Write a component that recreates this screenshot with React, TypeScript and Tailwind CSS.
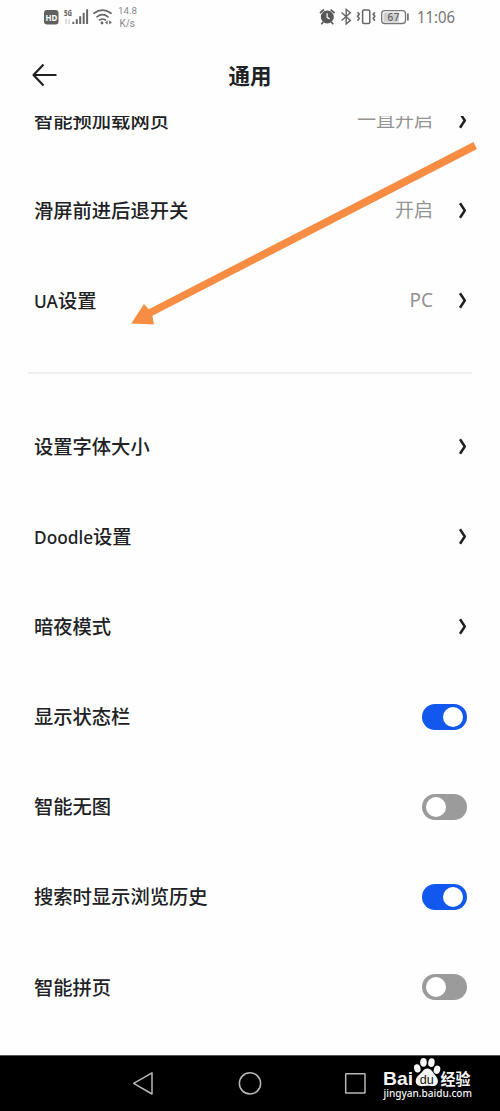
import React from "react";

const chevronPath = "M2 1.2 L6.8 8.5 L2 15.8";

function Chevron() {
  return (
    <svg className="ml-[25px] mr-[33px] h-[17px] w-[9px]" viewBox="0 0 9 17" fill="none">
      <path d={chevronPath} stroke="#202124" strokeWidth="2.5" strokeLinejoin="round" />
    </svg>
  );
}

function Toggle({ on }: { on: boolean }) {
  return (
    <span
      className={
        on
          ? "mr-[33px] flex h-[26px] w-[45px] items-center justify-end rounded-full bg-[#1257ee] pr-[4px]"
          : "mr-[33px] flex h-[26px] w-[45px] items-center justify-start rounded-full bg-[#9b9b9b] pl-[4px]"
      }
    >
      <span className="size-[20px] rounded-full bg-white" />
    </span>
  );
}

type RowProps = { latin?: string; label: string; value?: string; toggle?: boolean };

function Row({ latin, label, value, toggle }: RowProps) {
  return (
    <div className="flex h-[90.2px] shrink-0 items-center pl-[34px] text-[#202124]">
      <div className="flex flex-1 items-baseline whitespace-nowrap leading-none">
        {latin && <span className="text-[17.3px] font-medium">{latin}</span>}
        <span className="text-[19.3px] font-medium">{label}</span>
      </div>
      {value && <span className="text-[19px] leading-none text-[#939393]">{value}</span>}
      {toggle === undefined ? <Chevron /> : <Toggle on={toggle} />}
    </div>
  );
}

function StatusBar() {
  return (
    <div className="flex h-[36px] shrink-0 justify-between text-[#666666]">
      <svg className="h-[36px] w-[150px]" viewBox="0 0 150 36" fill="none">
        <rect x="44" y="10" width="14.5" height="14.5" rx="3" fill="#606060" />
        <text x="45.4" y="20.8" fontSize="9" fontWeight="700" fill="#fff" textLength="11.8" lengthAdjust="spacingAndGlyphs">HD</text>
        <text x="64" y="15.7" fontSize="8.5" fontWeight="700" fill="#606060" textLength="8" lengthAdjust="spacingAndGlyphs">5G</text>
        <path d="M66 19 V24 M69 19 V24" stroke="#c8c8c8" strokeWidth="1.2" />
        <g fill="#666">
          <rect x="72.3" y="21.8" width="2" height="2.2" />
          <rect x="75.8" y="19.2" width="2" height="4.8" />
          <rect x="79.2" y="16.2" width="2" height="7.8" />
          <rect x="82.7" y="12.8" width="2" height="11.2" />
          <rect x="86.1" y="9.3" width="2" height="14.7" />
        </g>
        <g stroke="#666" strokeWidth="1.7" strokeLinecap="round">
          <path d="M94 13.3 Q102.5 6.8 111 13.3" />
          <path d="M97 16.8 Q102.5 12.5 108 16.8" />
          <path d="M99.6 20 Q102.5 18 105.4 20" />
        </g>
        <circle cx="102" cy="23" r="1.4" fill="#666" />
        <path d="M105 22.6 L107.6 20.6 V24.6Z M112 22.6 L109.2 20.6 V24.6Z" fill="#666" />
        <text x="118" y="13.8" fontSize="9.8" fill="#888" fontFamily="Roboto, sans-serif" textLength="19">14.8</text>
        <text x="119.5" y="26.6" fontSize="10" fill="#888" fontFamily="Roboto, sans-serif" textLength="15.5">K/s</text>
      </svg>
      <svg className="h-[36px] w-[190px]" viewBox="310 0 190 36" fill="none">
        <circle cx="327.3" cy="17" r="6.5" fill="#585858" />
        <path d="M320 13 L324 9.6 M334.6 13 L330.6 9.6 M323.3 22 L321.3 24.2 M331.3 22 L333.3 24.2" stroke="#585858" strokeWidth="1.7" />
        <path d="M327.1 13.2 V17.3 L329.8 19" stroke="#fff" strokeWidth="1.2" />
        <path d="M341.6 12.6 L350.4 20.4 L346.2 24 V9.4 L350.4 12.8 L341.6 20.6" stroke="#666" strokeWidth="1.4" />
        <rect x="362.6" y="10" width="7.2" height="13.6" rx="1.3" stroke="#666" strokeWidth="1.5" />
        <path d="M357.6 12.3 L359.2 14.3 L357.6 16.3 L359.2 18.3 L357.6 20.8 M374.8 12.3 L373.2 14.3 L374.8 16.3 L373.2 18.3 L374.8 20.8" stroke="#666" strokeWidth="1.6" />
        <rect x="381.7" y="10.7" width="23.8" height="12.8" rx="3" stroke="#777" strokeWidth="1.3" />
        <rect x="383.5" y="12.5" width="15.5" height="9.2" rx="1.2" fill="#cfcfcf" />
        <path d="M407.9 13.5 V20.5" stroke="#666" strokeWidth="1.6" />
        <text x="387.5" y="20.8" fontSize="10" fontWeight="500" fill="#606060" textLength="12">67</text>
        <text x="417" y="23" fontSize="15.5" fill="#747474" textLength="38" lengthAdjust="spacingAndGlyphs">11:06</text>
      </svg>
    </div>
  );
}

function NavBar() {
  return (
    <div className="h-[56px] shrink-0 border-t border-[#555] bg-black">
      <svg className="h-[55px] w-[500px]" viewBox="0 1056 500 55" fill="none">
        <g stroke="#b8b8b8" strokeWidth="1.5" strokeLinejoin="round">
          <path d="M133.7 1083.4 L152 1072.8 V1094 Z" />
          <circle cx="250" cy="1083.4" r="10.6" />
          <rect x="345.7" y="1073.7" width="19.3" height="19.3" rx="0.6" />
        </g>
        <g fill="#f5f5f5">
          <text x="383" y="1085" fontSize="19" fontWeight="700" fontFamily="Liberation Sans, sans-serif" textLength="30" lengthAdjust="spacingAndGlyphs">Bai</text>
          <ellipse cx="417.3" cy="1068.4" rx="3.2" ry="4.2" transform="rotate(-16 417.3 1068.4)" />
          <ellipse cx="423.5" cy="1062.3" rx="3.3" ry="4.4" />
          <ellipse cx="431.4" cy="1062.6" rx="3.2" ry="4.4" transform="rotate(10 431.4 1062.6)" />
          <ellipse cx="437" cy="1069.8" rx="3.2" ry="4.2" transform="rotate(18 437 1069.8)" />
          <path d="M427.3 1068.6 C423.5 1068.6 422.5 1072.4 419.5 1074.6 C414.3 1078.2 414.2 1085.5 420.4 1086.1 C425 1086.3 427 1085.3 431.2 1086 C438 1087 440 1080.5 435.6 1075.7 C432.8 1072.8 431.5 1068.6 427.3 1068.6Z" />
          <text x="440.5" y="1084.5" fontSize="15.5" fontWeight="700" fontFamily="Noto Sans CJK SC, sans-serif" textLength="30" lengthAdjust="spacingAndGlyphs">经验</text>
          <text x="383.5" y="1097" fontSize="10.5" fontWeight="500" fontFamily="Noto Sans, sans-serif" textLength="88.5" lengthAdjust="spacingAndGlyphs">jingyan.baidu.com</text>
        </g>
        <text x="419.8" y="1083.8" fontSize="12.5" fill="#111" fontFamily="Liberation Sans, sans-serif" textLength="14" lengthAdjust="spacingAndGlyphs">du</text>
      </svg>
    </div>
  );
}

export default function App() {
  return (
    <div className="relative flex h-[1111px] w-[500px] flex-col overflow-hidden bg-[#fefefe] font-['Noto_Sans','Noto_Sans_CJK_SC',sans-serif]">
      <StatusBar />
      <header className="grid h-[80px] shrink-0 grid-cols-[100px_1fr_100px] items-center text-[#202124]">
        <svg className="mb-[2px] ml-[31px] h-[24px] w-[27px]" viewBox="0 0 27 24" fill="none" stroke="#202124" strokeWidth="2.2" strokeLinejoin="round">
          <path d="M12.5 1.5 L2.5 12 L12.5 22.5 M2.5 12 H25.5" />
        </svg>
        <h1 className="text-center text-[21.5px] font-semibold leading-none">通用</h1>
      </header>
      <main className="flex flex-1 flex-col overflow-hidden">
        <div className="-mt-[40.5px] flex shrink-0 flex-col">
          <Row label="智能预加载网页" value="一直开启" />
          <Row label="滑屏前进后退开关" value="开启" />
          <Row latin="UA" label="设置" value="PC" />
        </div>
        <hr className="mx-[28px] mb-[27px] mt-[26px] shrink-0 border-t-2 border-[#eeeeee]" />
        <div className="flex shrink-0 flex-col">
          <Row label="设置字体大小" />
          <Row latin="Doodle" label="设置" />
          <Row label="暗夜模式" />
          <Row label="显示状态栏" toggle={true} />
          <Row label="智能无图" toggle={false} />
          <Row label="搜索时显示浏览历史" toggle={true} />
          <Row label="智能拼页" toggle={false} />
        </div>
      </main>
      <NavBar />
      <svg className="pointer-events-none absolute left-0 top-0 h-[340px] w-[500px]" viewBox="0 0 500 340">
        <path d="M131.3 323.4 L144 304 L148.8 309.2 L473.5 142 L477 149 L152.4 315.8 L154 324.4 Z" fill="#f78d42" />
      </svg>
    </div>
  );
}
